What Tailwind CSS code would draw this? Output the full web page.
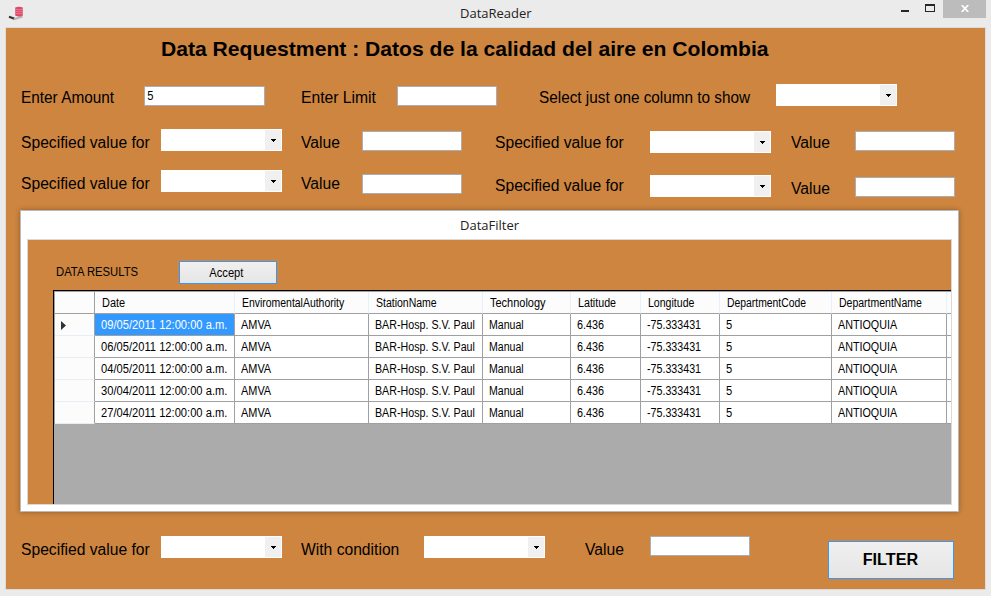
<!DOCTYPE html>
<html lang="es">
<head>
<meta charset="utf-8">
<title>DataReader</title>
<script src="https://cdn.jsdelivr.net/npm/@tailwindcss/browser@4"></script>
</head>
<body class="w-[991px] h-[596px] overflow-hidden bg-[#ebebeb] text-black font-['Liberation_Sans',Arial,sans-serif]">
<svg class="hidden"><symbol id="arrow" viewBox="0 0 16 20"><path d="M6 9h5v1h-1v1h-1v1h-1v-1h-1v-1h-1z" fill="#000" shape-rendering="crispEdges"/></symbol></svg>
<div class="flex flex-col h-[596px]">
  <header class="flex h-[27px] items-start">
    <svg class="ml-2 mt-[6px] w-4 h-4 shrink-0" viewBox="0 0 16 16">
      <path d="M1 10.800 6.500 12.800" fill="none" stroke="#333" stroke-width="2.200"/>
      <path d="M6 13.200 14.500 10.500" stroke="#b5b5b5" stroke-width="2" fill="none"/>
      <path d="M7.200 1.600q3.800-1.500 7.600 0v8q-3.800 1.800-7.600 0z" fill="#dc4867"/>
      <path d="M7.200 3.200q3.800 1.200 7.600 0M7.200 5.200q3.800 1.200 7.600 0M7.200 7.200q3.800 1.200 7.600 0" stroke="#f08ba0" stroke-width=".7" fill="none"/>
    </svg>
    <div class="ml-[436px] mt-[4px] w-[72px] text-[13px] leading-[18px] text-[#222] whitespace-nowrap font-['Open_Sans',sans-serif]"><span class="inline-block">DataReader</span></div>
    <div class="ml-[369px] mt-[10px] w-2 h-[2px] bg-[#262626]"></div>
    <div class="ml-4 mt-1 w-[10px] h-2 border border-t-2 border-[#262626]"></div>
    <div class="ml-2 w-[43px] h-[18px] bg-[#bcbcbc] flex justify-center">
      <svg class="mt-[5px] w-2 h-[7px]" viewBox="0 0 8 7"><path d="M.7 0 7.300 7M7.300 0 .7 7" stroke="#fff" stroke-width="1.700"/></svg>
    </div>
  </header>
  <main class="ml-[5px] w-[981px] h-[563px] border border-[#dcdcdc] bg-[#cd853f] flex flex-col text-[16px] leading-[22px] whitespace-nowrap">
    <h1 class="h-[56px] pt-[8px] pl-[155px] text-[21px] leading-[26px] font-bold"><span class="inline-block origin-left scale-x-[1.005]">Data Requestment : Datos de la calidad del aire en Colombia</span></h1>
    <div class="flex items-start h-[45px]">
      <label class="ml-[15px] mt-[3px] w-[123px]"><span class="inline-block origin-left scale-x-[0.96]">Enter Amount</span></label>
      <div class="mt-[2px] w-[121px] h-5 border border-[#abadb3] bg-white pl-[2px] text-[12px] leading-[19px]"><span class="inline-block scale-x-[0.93]">5</span></div>
      <label class="ml-[36px] mt-[3px] w-[96px]"><span class="inline-block origin-left scale-x-[0.98]">Enter Limit</span></label>
      <div class="mt-[2px] w-[100px] h-5 border border-[#abadb3] bg-white"></div>
      <label class="ml-[42px] mt-[3px] w-[237px]"><span class="inline-block origin-left scale-x-[0.957]">Select just one column to show</span></label>
      <div class="w-[121px] h-[22px] bg-white p-px flex justify-end"><svg class="w-4 h-5 bg-[#f0f0f0]"><use href="#arrow"/></svg></div>
    </div>
    <div class="flex items-start h-[41px]">
      <label class="ml-[15px] mt-[3px] w-[140px]"><span class="inline-block origin-left scale-x-[0.978]">Specified value for</span></label>
      <div class="w-[121px] h-[22px] bg-white p-px flex justify-end"><svg class="w-4 h-5 bg-[#f0f0f0]"><use href="#arrow"/></svg></div>
      <label class="ml-[19px] mt-[3px] w-[61px]"><span class="inline-block origin-left scale-x-[0.98]">Value</span></label>
      <div class="mt-[2px] w-[100px] h-5 border border-[#abadb3] bg-white"></div>
      <label class="ml-[33px] mt-[3px] w-[155px]"><span class="inline-block origin-left scale-x-[0.978]">Specified value for</span></label>
      <div class="mt-[2px] w-[121px] h-[22px] bg-white p-px flex justify-end"><svg class="w-4 h-5 bg-[#f0f0f0]"><use href="#arrow"/></svg></div>
      <label class="ml-5 mt-[3px] w-[64px]"><span class="inline-block origin-left scale-x-[0.98]">Value</span></label>
      <div class="mt-[2px] w-[100px] h-5 border border-[#abadb3] bg-white"></div>
    </div>
    <div class="flex items-start h-[40px]">
      <label class="ml-[15px] mt-[3px] w-[140px]"><span class="inline-block origin-left scale-x-[0.978]">Specified value for</span></label>
      <div class="w-[121px] h-[22px] bg-white p-px flex justify-end"><svg class="w-4 h-5 bg-[#f0f0f0]"><use href="#arrow"/></svg></div>
      <label class="ml-[19px] mt-[3px] w-[61px]"><span class="inline-block origin-left scale-x-[0.98]">Value</span></label>
      <div class="mt-[4px] w-[100px] h-5 border border-[#abadb3] bg-white"></div>
      <label class="ml-[33px] mt-[5px] w-[155px]"><span class="inline-block origin-left scale-x-[0.978]">Specified value for</span></label>
      <div class="mt-[5px] w-[121px] h-[22px] bg-white p-px flex justify-end"><svg class="w-4 h-5 bg-[#f0f0f0]"><use href="#arrow"/></svg></div>
      <label class="ml-5 mt-[8px] w-[64px]"><span class="inline-block origin-left scale-x-[0.98]">Value</span></label>
      <div class="mt-[7px] w-[100px] h-5 border border-[#abadb3] bg-white"></div>
    </div>
    <section class="ml-[14px] w-[939px] h-[302px] shrink-0 border border-[#b9b9b9] bg-white shadow-[0_0_5px_rgba(0,0,0,0.3)] px-[6px] flex flex-col text-[12px]">
      <div class="h-7 pt-[5px] pl-[433px] text-[13px] leading-[18px] text-[#222] font-['Open_Sans',sans-serif]"><span class="inline-block">DataFilter</span></div>
      <div class="w-[925px] h-[266px] border border-[#d9d9d9] bg-[#cd853f] flex flex-col overflow-hidden">
        <div class="flex items-start h-[50px]">
          <div class="ml-[28px] mt-[21px] w-[123px]"><span class="inline-block origin-left scale-x-[0.94]">DATA RESULTS</span></div>
          <button class="mt-[21px] w-[98px] h-[23px] border border-[#3399ff] bg-linear-to-b from-[#f0f0f0] to-[#e5e5e5] leading-[22px] pr-1"><span class="inline-block scale-x-[0.93]">Accept</span></button>
        </div>
        <div class="ml-[25px] h-[214px] border-l border-t border-black bg-[#ababab]">
          <div id="grid" class="border-l border-t border-[#a0a0a0] flex flex-col"></div>
        </div>
      </div>
    </section>
    <div class="flex items-start pt-[24px]">
      <label class="ml-[15px] mt-[3px] w-[140px]"><span class="inline-block origin-left scale-x-[0.978]">Specified value for</span></label>
      <div class="w-[121px] h-[22px] bg-white p-px flex justify-end"><svg class="w-4 h-5 bg-[#f0f0f0]"><use href="#arrow"/></svg></div>
      <label class="ml-[19px] mt-[3px] w-[123px]"><span class="inline-block origin-left scale-x-[0.978]">With condition</span></label>
      <div class="w-[121px] h-[22px] bg-white p-px flex justify-end"><svg class="w-4 h-5 bg-[#f0f0f0]"><use href="#arrow"/></svg></div>
      <label class="ml-10 mt-[3px] w-[65px]"><span class="inline-block origin-left scale-x-[0.98]">Value</span></label>
      <div class="w-[100px] h-5 border border-[#abadb3] bg-white"></div>
      <button class="ml-[78px] mt-[5px] w-[126px] h-[38px] border border-[#3399ff] bg-linear-to-b from-[#f0f0f0] to-[#e5e5e5] font-bold pr-[2px]"><span class="inline-block scale-x-[1.01]">FILTER</span></button>
    </div>
  </main>
</div>
<script>
const dates = ['09/05/2011', '06/05/2011', '04/05/2011', '30/04/2011', '27/04/2011'];
const text = (t, s) => `<span class="inline-block origin-left ${s}">${t}</span>`;
const row = 'grid grid-rows-[22px] grid-cols-[40px_140px_134px_114px_88px_70px_79px_112px_115px_5px] h-[22px] leading-[23px]';
const heads = [
  ['Date', 'scale-x-[0.91]'], ['EnviromentalAuthority', 'scale-x-[0.87]'], ['StationName', 'scale-x-[0.875]'],
  ['Technology', 'scale-x-[0.915]'], ['Latitude', 'scale-x-[0.89]'], ['Longitude', 'scale-x-[0.88]'],
  ['DepartmentCode', 'scale-x-[0.865]'], ['DepartmentName', 'scale-x-[0.875]'], ['', '']];
let html = `<div class="${row} bg-[#fcfcfc]"><div class="border-r border-b border-[#a0a0a0]"></div>` +
  heads.map(([h, s]) => `<div class="border-r border-b border-r-[#e5f1fb] border-b-[#a0a0a0] pl-[7px]">${text(h, s)}</div>`).join('') + '</div>';
dates.forEach((d, i) => {
  const cells = [
    [d + ' 12:00:00 a.m.', 'scale-x-[0.93]'], ['AMVA', 'scale-x-[0.91]'], ['BAR-Hosp. S.V. Paul', 'scale-x-[0.89]'],
    ['Manual', 'scale-x-[0.88]'], ['6.436', 'scale-x-[0.9]'], ['-75.333431', 'scale-x-[0.89]'],
    ['5', 'scale-x-[0.93]'], ['ANTIOQUIA', 'scale-x-[0.895]'], ['', '']];
  const mark = i === 0 ? '<svg class="ml-[6px] mt-[7px] w-[5px] h-[9px]" viewBox="0 0 5 9"><path d="M0 0 5 4.500 0 9z" fill="#333"/></svg>' : '';
  html += `<div class="${row} bg-white"><div class="bg-[#fcfcfc] border-r border-b border-r-[#a0a0a0] border-b-[#e8eef5]">${mark}</div>` +
    cells.map(([c, s], j) => `<div class="border-r border-b border-[#a0a0a0] pl-[6px] ${i === 0 && j === 0 ? 'bg-[#3399ff] text-white' : ''}">${text(c, s)}</div>`).join('') + '</div>';
});
document.getElementById('grid').innerHTML = html;
</script>
</body>
</html>
